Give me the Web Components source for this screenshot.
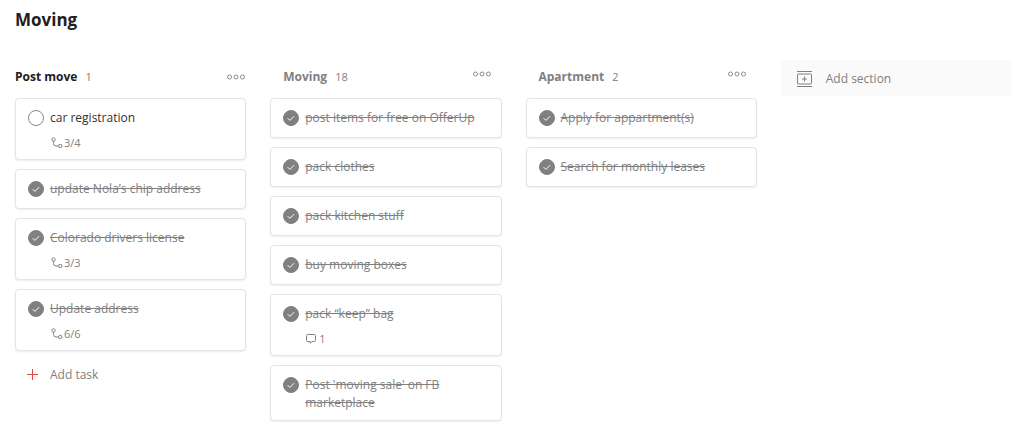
<!DOCTYPE html>
<html lang="en">
<head>
<meta charset="utf-8">
<title>Moving</title>
<style>
    body {
        margin: 0;
        background: #fff;
        color: #202020;
        font-family: "Open Sans", "Noto Sans", sans-serif;
        font-size: 12px;
        line-height: 18px;
    }
</style>
</head>
<body>

<task-board name="Moving">
    <board-section name="Post move" count="1" active>
        <task-card subtasks="3/4">car registration</task-card>
        <task-card done>update Nola’s chip address</task-card>
        <task-card done subtasks="3/3">Colorado drivers license</task-card>
        <task-card done subtasks="6/6">Update address</task-card>
        <add-task slot="footer">Add task</add-task>
    </board-section>
    <board-section name="Moving" count="18">
        <task-card done>post items for free on OfferUp</task-card>
        <task-card done>pack clothes</task-card>
        <task-card done>pack kitchen stuff</task-card>
        <task-card done>buy moving boxes</task-card>
        <task-card done comments="1">pack “keep” bag</task-card>
        <task-card done>Post 'moving sale' on FB marketplace</task-card>
    </board-section>
    <board-section name="Apartment" count="2">
        <task-card done>Apply for appartment(s)</task-card>
        <task-card done>Search for monthly leases</task-card>
    </board-section>
    <add-section>Add section</add-section>
</task-board>

<script>
const buttonReset = `
    button {
        margin: 0;
        padding: 0;
        border: 0;
        background: none;
        color: inherit;
        font: inherit;
        text-align: left;
        cursor: pointer;
    }
    svg { display: block; flex: none; }
`;

function render(element, templateString) {
    const template = document.createElement('template');
    template.innerHTML = templateString;
    const shadowRoot = element.attachShadow({mode: "open"});
    shadowRoot.appendChild(template.content.cloneNode(true));
    return shadowRoot;
}

class TaskBoard extends HTMLElement {
    constructor() {
        super();
        const root = render(this, `
            <style>
                :host { display: block; padding: 8px 12px 8px 15px; }
                h1 {
                    margin: 0 0 28px;
                    font-size: 17px;
                    line-height: 24px;
                    font-weight: 700;
                }
                main {
                    display: grid;
                    grid-template-columns: repeat(4, minmax(0, 1fr));
                    gap: 24px;
                    align-items: start;
                }
            </style>
            <h1></h1>
            <main><slot></slot></main>
        `);
        root.querySelector("h1").textContent = this.getAttribute("name");
    }
}

class BoardSection extends HTMLElement {
    constructor() {
        super();
        const root = render(this, `
            <style>
                ${buttonReset}
                :host { display: block; color: #808080; }
                header {
                    display: flex;
                    align-items: flex-start;
                    gap: 8px;
                    padding: 8px 11px 0 13px;
                    height: 30px;
                }
                :host([active]) header { padding: 8px 1px 0 0; }
                h2 {
                    margin: 0;
                    font-size: 12px;
                    line-height: 18px;
                    font-weight: 700;
                }
                :host([active]) h2 { color: #202020; }
                .count { font-size: 11px; }
                button { margin-left: auto; padding-top: 3px; }
                :host([active]) button { padding-top: 6px; }
                .list { display: flex; flex-direction: column; gap: 9px; }
            </style>
            <header>
                <h2></h2>
                <span class="count"></span>
                <button type="button" aria-label="Section actions">
                    <svg width="18" height="6" viewBox="0 0 18 6" fill="none" stroke="#8c8c8c">
                        <circle cx="2.5" cy="3" r="2"/><circle cx="9" cy="3" r="2"/><circle cx="15.5" cy="3" r="2"/>
                    </svg>
                </button>
            </header>
            <div class="list"><slot></slot></div>
            <slot name="footer"></slot>
        `);
        root.querySelector("h2").textContent = this.getAttribute("name");
        root.querySelector(".count").textContent = this.getAttribute("count");
    }
}

const branchIcon = `
    <svg width="12" height="12" viewBox="0 0 12 12" fill="none" stroke="#808080">
        <circle cx="2.5" cy="2.5" r="1.7"/>
        <circle cx="9.3" cy="9" r="1.7"/>
        <path d="M2.5 4.2v2.3a2.5 2.5 0 0 0 2.5 2.5h2.6"/>
    </svg>
`;

const commentIcon = `
    <svg width="10" height="10" viewBox="0 0 10 10" fill="none" stroke="#808080">
        <path d="M1.5 .5h7a1 1 0 0 1 1 1v5a1 1 0 0 1-1 1H6L4 9.3V7.5H1.5a1 1 0 0 1-1-1v-5a1 1 0 0 1 1-1z"/>
    </svg>
`;

class TaskCard extends HTMLElement {
    constructor() {
        super();
        const root = render(this, `
            <style>
                :host {
                    display: grid;
                    grid-template-columns: 16px minmax(0, 1fr);
                    column-gap: 6px;
                    box-sizing: border-box;
                    min-height: 40px;
                    padding: 10px 20px 8px 12px;
                    border: 1px solid #e4e4e4;
                    border-radius: 4px;
                    box-shadow: 0 1px 2px rgba(0, 0, 0, .08);
                    background: #fff;
                    color: #303030;
                }
                :host([done]) { color: #808080; }
                input {
                    appearance: none;
                    box-sizing: border-box;
                    width: 16px;
                    height: 16px;
                    margin: 1px 0;
                    border: 1px solid #888;
                    border-radius: 50%;
                    grid-area: 1 / 1;
                }
                input:checked { border-color: #808080; background: #808080; }
                .check { grid-area: 1 / 1; margin: 1px 0; pointer-events: none; }
                :host(:not([done])) .check { display: none; }
                :host([done]) label { text-decoration: line-through; }
                .meta {
                    display: flex;
                    align-items: center;
                    gap: 1px;
                    grid-column: 2;
                    margin-top: 8px;
                    padding-left: 1px;
                    font-size: 11px;
                    line-height: 16px;
                    color: #808080;
                }
                .meta.comments { gap: 3px; }
            </style>
            <input type="checkbox" id="done">
            <svg class="check" width="16" height="16" viewBox="0 0 16 16" fill="none" stroke="#fff">
                <path d="M4.7 8.2l2.2 2.2 4.2-4.2"/>
            </svg>
            <label for="done"><slot></slot></label>
        `);
        root.querySelector("input").checked = this.hasAttribute("done");

        for (const kind of ["subtasks", "comments"]) {
            if (this.hasAttribute(kind)) {
                const meta = document.createElement("div");
                meta.className = "meta " + kind;
                meta.innerHTML = (kind == "subtasks" ? branchIcon : commentIcon) + "<span></span>";
                meta.querySelector("span").textContent = this.getAttribute(kind);
                root.appendChild(meta);
            }
        }
    }
}

class AddTask extends HTMLElement {
    constructor() {
        super();
        render(this, `
            <style>
                ${buttonReset}
                :host { display: block; padding: 15px 0 0 12px; color: #808080; }
                button { display: flex; align-items: center; gap: 11px; }
            </style>
            <button type="button">
                <svg width="12" height="12" viewBox="0 0 12 12" stroke="#e0493c">
                    <path d="M5.5 0v11M0 5.5h11"/>
                </svg>
                <slot></slot>
            </button>
        `);
    }
}

class AddSection extends HTMLElement {
    constructor() {
        super();
        render(this, `
            <style>
                ${buttonReset}
                :host { display: block; color: #808080; }
                button {
                    display: flex;
                    align-items: center;
                    gap: 14px;
                    width: 100%;
                    padding: 10px 16px 8px;
                    border-radius: 4px;
                    background: #fafafa;
                }
            </style>
            <button type="button">
                <svg width="15" height="16" viewBox="0 0 15 16" fill="none" stroke="#808080">
                    <path d="M0 .5h15M0 15.5h15M7.5 5.5v5M5 8h5"/>
                    <rect x=".5" y="3" width="14" height="10" rx="1"/>
                </svg>
                <slot></slot>
            </button>
        `);
    }
}

customElements.define("task-board", TaskBoard);
customElements.define("board-section", BoardSection);
customElements.define("task-card", TaskCard);
customElements.define("add-task", AddTask);
customElements.define("add-section", AddSection);
</script>
</body>
</html>
